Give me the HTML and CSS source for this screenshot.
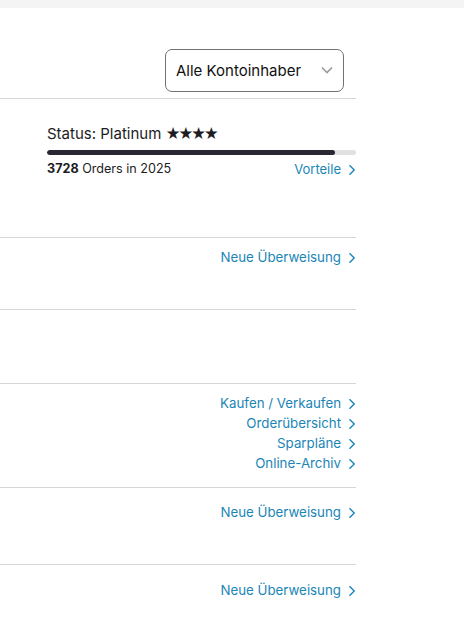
FILE: index.html
```html
<!DOCTYPE html>
<html lang="de">
<head>
<meta charset="utf-8">
<link rel="stylesheet" href="styles.css">
</head>
<body>
<div class="topbar"></div>
<main class="panel">
  <header class="header">
    <div class="select">
      <span>Alle Kontoinhaber</span>
      <svg class="select-chev" width="12" height="8" viewBox="0 0 12 8"><path d="M1 1.5 L6 6.5 L11 1.5" fill="none" stroke="#9a9a9a" stroke-width="1.6"/></svg>
    </div>
  </header>

  <section class="section status">
    <div class="status-title">Status: Platinum <span class="stars">★★★★</span></div>
    <div class="bar"><div class="bar-fill" style="width:93.2%"></div></div>
    <div class="status-row">
      <span class="orders"><b>3728</b> Orders in 2025</span>
      <a class="link" href="#">Vorteile<svg class="chev" width="8" height="12" viewBox="0 0 8 12"><path d="M1.5 1.3 L6.2 6 L1.5 10.7" fill="none" stroke="currentColor" stroke-width="1.4"/></svg></a>
    </div>
  </section>

  <section class="section links s2">
    <a class="link" href="#">Neue Überweisung<svg class="chev" width="8" height="12" viewBox="0 0 8 12"><path d="M1.5 1.3 L6.2 6 L1.5 10.7" fill="none" stroke="currentColor" stroke-width="1.4"/></svg></a>
  </section>

  <section class="section s3"></section>

  <section class="section links s4">
    <a class="link" href="#">Kaufen / Verkaufen<svg class="chev" width="8" height="12" viewBox="0 0 8 12"><path d="M1.5 1.3 L6.2 6 L1.5 10.7" fill="none" stroke="currentColor" stroke-width="1.4"/></svg></a>
    <a class="link" href="#">Orderübersicht<svg class="chev" width="8" height="12" viewBox="0 0 8 12"><path d="M1.5 1.3 L6.2 6 L1.5 10.7" fill="none" stroke="currentColor" stroke-width="1.4"/></svg></a>
    <a class="link" href="#">Sparpläne<svg class="chev" width="8" height="12" viewBox="0 0 8 12"><path d="M1.5 1.3 L6.2 6 L1.5 10.7" fill="none" stroke="currentColor" stroke-width="1.4"/></svg></a>
    <a class="link" href="#">Online-Archiv<svg class="chev" width="8" height="12" viewBox="0 0 8 12"><path d="M1.5 1.3 L6.2 6 L1.5 10.7" fill="none" stroke="currentColor" stroke-width="1.4"/></svg></a>
  </section>

  <section class="section links s5">
    <a class="link" href="#">Neue Überweisung<svg class="chev" width="8" height="12" viewBox="0 0 8 12"><path d="M1.5 1.3 L6.2 6 L1.5 10.7" fill="none" stroke="currentColor" stroke-width="1.4"/></svg></a>
  </section>

  <section class="section links s6">
    <a class="link" href="#">Neue Überweisung<svg class="chev" width="8" height="12" viewBox="0 0 8 12"><path d="M1.5 1.3 L6.2 6 L1.5 10.7" fill="none" stroke="currentColor" stroke-width="1.4"/></svg></a>
  </section>
</main>
</body>
</html>
```
FILE: styles.css
```css
* { box-sizing: border-box; }
html, body { margin: 0; padding: 0; background: #fff; }
body { font-family: "Inter", "Lato", sans-serif; color: #1c1c22; }

.topbar { height: 8px; background: #f4f4f4; }

.panel { width: 356px; }

.header {
  display: flex;
  justify-content: flex-end;
  padding: 41px 12px 6px 0;
}

.select {
  width: 179px;
  height: 43px;
  border: 1px solid #727272;
  border-radius: 7px;
  display: flex;
  align-items: center;
  justify-content: space-between;
  padding: 0 10px 0 10px;
  font-size: 15px;
  color: #111;
}
.select-chev { margin-top: -2px; }

.section { border-top: 1px solid #d6d6d6; }

.status {
  height: 139px;
  padding: 25px 0 0 47px;
}
.status-title { font-size: 15px; line-height: 20px; }
.stars { font-size: 14.5px; letter-spacing: -2.4px; }
.bar {
  margin-top: 6px;
  height: 5px;
  background: #e1e1e1;
  border-radius: 3px;
  overflow: hidden;
}
.bar-fill { height: 100%; background: #282832; border-radius: 3px; }
.status-row {
  margin-top: 4px;
  display: flex;
  justify-content: space-between;
  align-items: center;
  font-size: 12.6px;
  line-height: 18px;
}
.orders b { font-weight: 700; }

.links {
  display: flex;
  flex-direction: column;
  align-items: flex-end;
}
.link {
  color: #1a86b6;
  text-decoration: none;
  font-size: 13.3px;
  line-height: 20px;
  display: flex;
  align-items: center;
}
.status-row .link { font-size: 13px; }
.chev { margin-left: 7px; margin-top: 1px; }

.s2 { height: 72px; padding-top: 9px; }
.s3 { height: 74px; }
.s4 { height: 104px; padding-top: 9px; }
.s5 { height: 77px; padding-top: 14px; }
.s6 { height: 66px; padding-top: 15px; }
```
